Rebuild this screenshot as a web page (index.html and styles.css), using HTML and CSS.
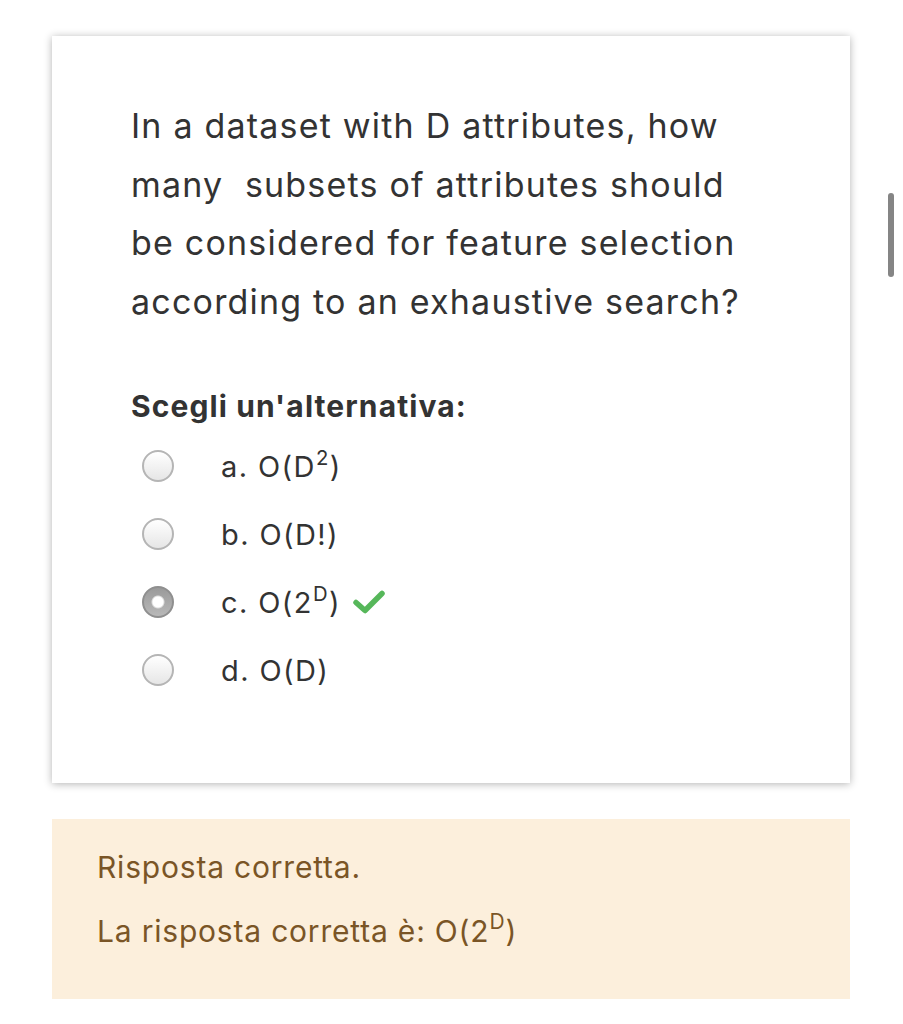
FILE: index.html
```html
<!DOCTYPE html>
<html lang="it">
<head>
<meta charset="utf-8">
<link rel="stylesheet" href="styles.css">
</head>
<body>
<div class="page">
  <div class="card">
    <p class="question">In a dataset with D attributes, how many&nbsp; subsets of attributes should be considered for feature selection according to an exhaustive search?</p>
    <div class="prompt">Scegli un'alternativa:</div>
    <div class="options">
      <div class="option"><span class="radio"></span><span class="label">a. O(D<sup>2</sup>)</span></div>
      <div class="option"><span class="radio"></span><span class="label">b. O(D!)</span></div>
      <div class="option"><span class="radio checked"></span><span class="label">c. O(2<sup>D</sup>)</span>
        <svg class="tick" viewBox="0 0 32 24" width="32" height="24"><path d="M3 12.5 L12 20.5 L29 3.5" fill="none" stroke="#56b75a" stroke-width="5.5" stroke-linecap="round" stroke-linejoin="round"/></svg>
      </div>
      <div class="option"><span class="radio"></span><span class="label">d. O(D)</span></div>
    </div>
  </div>
  <div class="feedback">
    <p class="fb-line">Risposta corretta.</p>
    <p class="fb-line">La risposta corretta è: O(2<sup>D</sup>)</p>
  </div>
</div>
<div class="scrollbar"></div>
</body>
</html>
```
FILE: styles.css
```css
html, body {
  margin: 0;
  padding: 0;
  background: #ffffff;
}
body {
  font-family: Inter, "Liberation Sans", Arial, sans-serif;
  color: #333333;
}
.page {
  padding: 36px 53px 0 52px;
  display: flex;
  flex-direction: column;
  gap: 36px;
}
.card {
  width: 798px;
  height: 747px;
  box-sizing: border-box;
  background: #fff;
  box-shadow: 0 1px 8px rgba(0, 0, 0, 0.3);
  padding: 61px 40px 0 79px;
}
.question {
  margin: 0;
  font-size: 34px;
  line-height: 58.6px;
  letter-spacing: 1.2px;
  width: 640px;
}
.prompt {
  margin-top: 55px;
  font-size: 30px;
  font-weight: 700;
  line-height: 40px;
  letter-spacing: 1.1px;
}
.options {
  display: flex;
  flex-direction: column;
  margin-top: 6px;
}
.option {
  display: flex;
  align-items: center;
  height: 68px;
  font-size: 29px;
  letter-spacing: 1.4px;
}
.radio {
  width: 28px;
  height: 28px;
  border: 2px solid #b5b5b5;
  border-radius: 50%;
  background: linear-gradient(#ffffff, #e6e6e6);
  margin-left: 11px;
  margin-right: 47px;
  box-sizing: content-box;
}
.radio.checked {
  border-color: #8f8f8f;
  background: radial-gradient(circle, #ffffff 0 5px, #dcdcdc 6px, transparent 7px), linear-gradient(#9a9a9a, #b8b8b8);
}
.label sup, .fb-line sup {
  font-size: 0.7em;
  vertical-align: 0.6em;
  line-height: 0;
}
.tick {
  margin-left: 12px;
}
.feedback {
  width: 798px;
  height: 180px;
  box-sizing: border-box;
  background: #fcefdc;
  padding: 16px 0 0 45px;
  color: #7a5526;
}
.fb-line {
  margin: 0;
  font-size: 30px;
  line-height: 64px;
  letter-spacing: 0.8px;
}
.scrollbar {
  position: fixed;
  left: 888px;
  top: 193px;
  width: 6px;
  height: 84px;
  border-radius: 3px;
  background: #858585;
}
```
